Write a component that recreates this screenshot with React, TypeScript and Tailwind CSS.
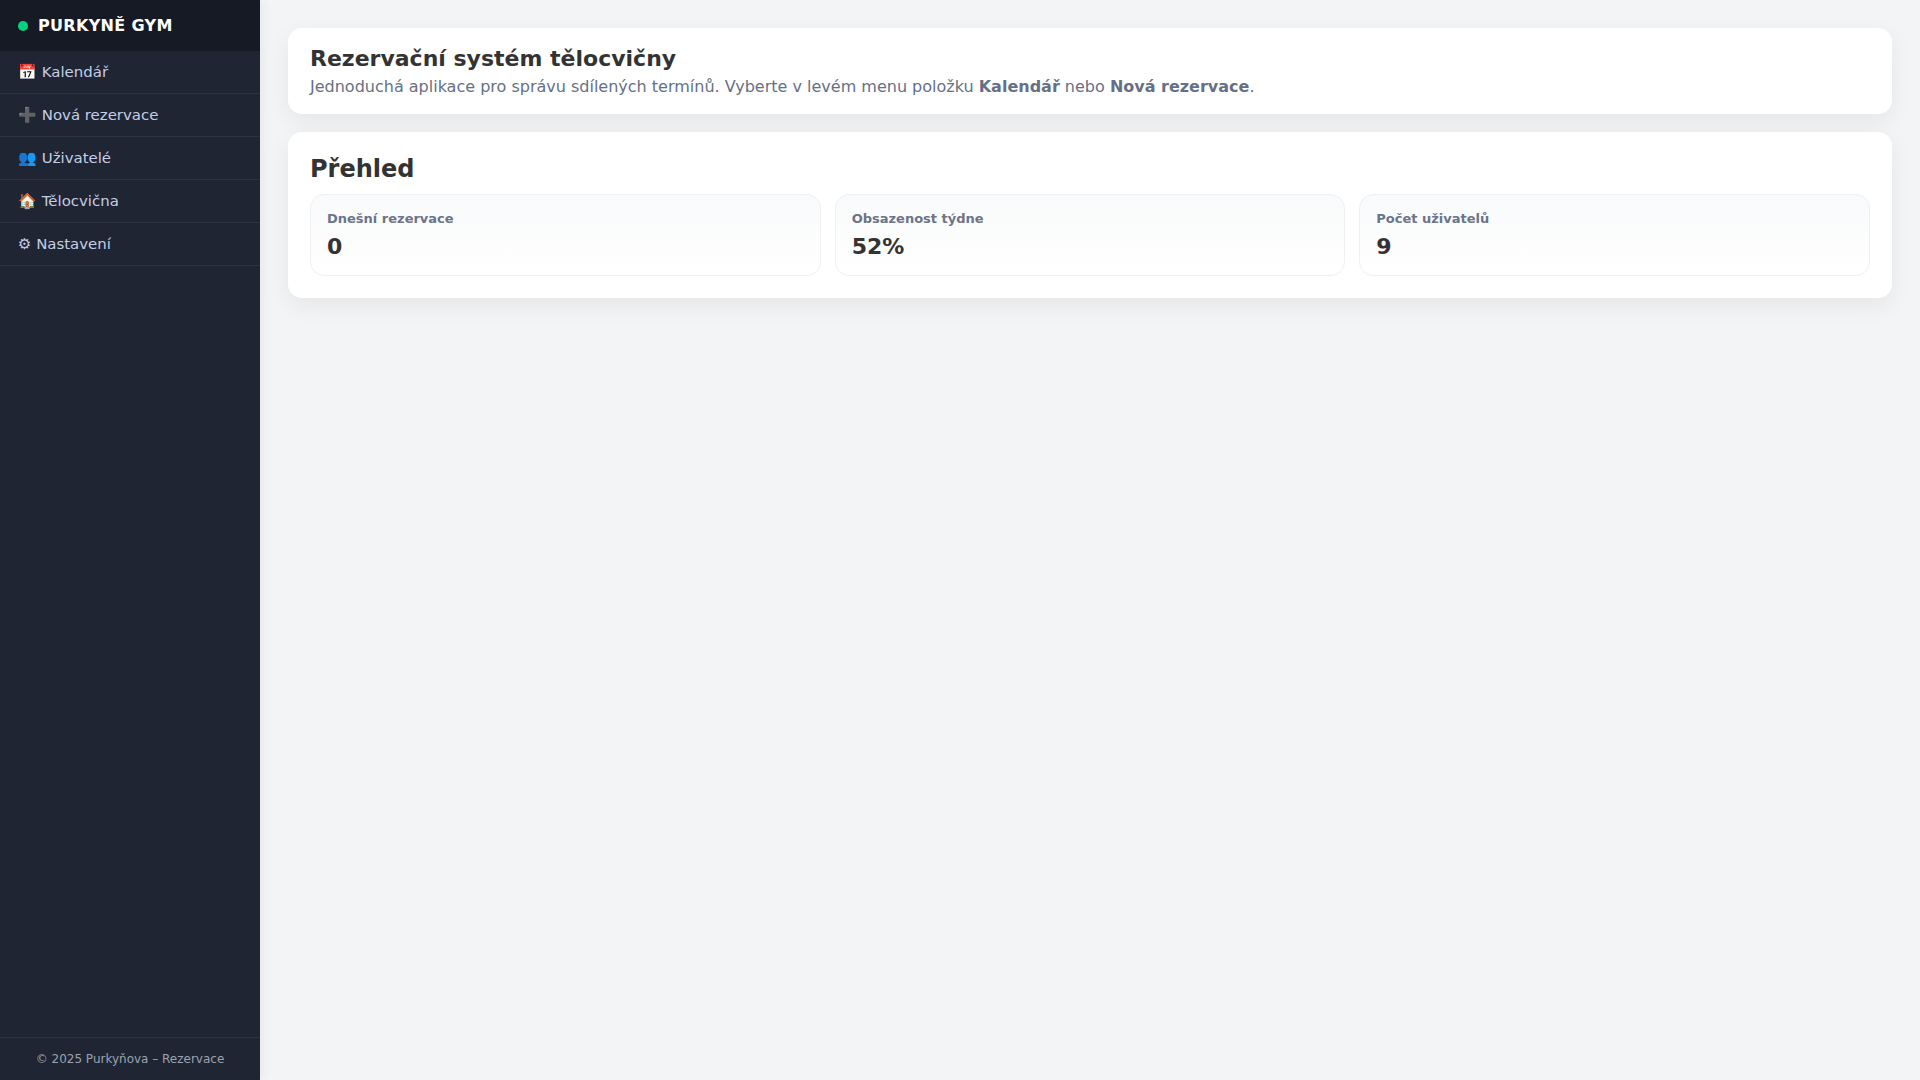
const navItems = [
  { icon: "📅", label: "Kalendář" },
  { icon: "➕", label: "Nová rezervace" },
  { icon: "👥", label: "Uživatelé" },
  { icon: "🏠", label: "Tělocvična" },
  { icon: "⚙", label: "Nastavení" },
];

const stats = [
  { label: "Dnešní rezervace", value: "0" },
  { label: "Obsazenost týdne", value: "52%" },
  { label: "Počet uživatelů", value: "9" },
];

export default function App() {
  return (
    <div className="flex h-screen bg-[#f3f4f6] font-['DejaVu_Sans',sans-serif] text-[#333333]">
      <aside className="flex w-[260px] shrink-0 flex-col bg-[#1f2533] shadow-[2px_0_12px_rgba(0,0,0,0.06)]">
        <div className="flex h-[51px] items-center gap-[10px] bg-[#161a25] px-[18px] text-[16px] font-bold tracking-[0.32px] text-white">
          <span className="h-[10px] w-[10px] rounded-full bg-[#00d47e]"></span>
          PURKYNĚ GYM
        </div>
        <nav className="flex-1">
          {navItems.map((item) => (
            <a
              key={item.label}
              className="block h-[43px] border-b border-[#2c3242] px-[18px] text-[14.95px] leading-[42px] text-[#c5cde6]"
            >
              {item.icon} {item.label}
            </a>
          ))}
        </nav>
        <div className="h-[43px] border-t border-[#2c3242] text-center text-[12px] leading-[42px] text-[#9ca3af]">
          © 2025 Purkyňova – Rezervace
        </div>
      </aside>

      <main className="flex-1 p-[28px]">
        <section className="mb-[18px] h-[86px] rounded-[14px] bg-white px-[22px] pt-[17px] shadow-[0_8px_24px_rgba(0,0,0,0.06)]">
          <h1 className="mb-[2px] text-[22px] leading-[28px] font-bold">Rezervační systém tělocvičny</h1>
          <p className="text-[16px] leading-[24px] text-[#667085]">
            Jednoduchá aplikace pro správu sdílených termínů. Vyberte v levém menu položku{" "}
            <strong>Kalendář</strong> nebo <strong>Nová rezervace</strong>.
          </p>
        </section>

        <section className="rounded-[14px] bg-white p-[22px] shadow-[0_8px_24px_rgba(0,0,0,0.06)]">
          <h2 className="mb-[10px] text-[24px] leading-[30px] font-bold">Přehled</h2>
          <div className="grid grid-cols-3 gap-[14px]">
            {stats.map((stat) => (
              <div
                key={stat.label}
                className="h-[82px] rounded-[14px] border border-[#eef0f4] bg-gradient-to-b from-[#f9fafb] to-white px-[16px] py-[14px]"
              >
                <div className="text-[13px] leading-[20px] font-bold text-[#6b7488]">{stat.label}</div>
                <div className="mt-[3px] text-[22px] leading-[30px] font-bold">{stat.value}</div>
              </div>
            ))}
          </div>
        </section>
      </main>
    </div>
  );
}
